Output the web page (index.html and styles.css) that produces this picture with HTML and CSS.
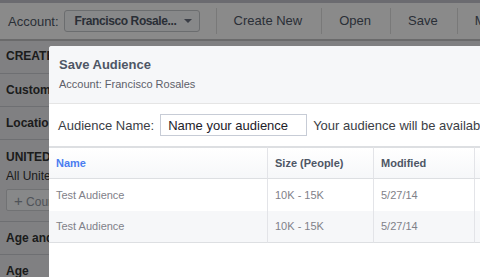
FILE: index.html
```html
<!DOCTYPE html>
<html>
<head>
    <title>Power Editor - Save Audience</title>
    <link rel="stylesheet" href="styles.css">
</head>
<body>
    <div class="page">
        <div class="toolbar">
            <span class="account-label">Account:</span>
            <div class="account-select">
                <span class="account-name">Francisco Rosale...</span>
                <span class="caret"></span>
            </div>
            <div class="tool">Create New</div>
            <div class="tool">Open</div>
            <div class="tool">Save</div>
            <div class="tool">Manage</div>
        </div>

        <div class="sidebar">
            <div class="side-row side-title">CREATE AUDIENCE</div>
            <div class="side-row">Custom Audiences</div>
            <div class="side-row">Locations</div>
            <div class="side-block">
                <div class="country">UNITED STATES</div>
                <div class="country-sub">All United States</div>
                <button class="add-btn"><span class="plus">+</span> Country</button>
            </div>
            <div class="side-row">Age and Gender</div>
            <div class="side-row">Age</div>
        </div>
    </div>

    <div class="overlay"></div>

    <div class="dialog">
        <div class="dialog-head">
            <div class="dialog-title">Save Audience</div>
            <div class="dialog-sub">Account: Francisco Rosales</div>
        </div>

        <div class="name-row">
            <label for="audienceName">Audience Name:</label>
            <input type="text" id="audienceName" value="Name your audience">
            <span class="name-note">Your audience will be available in all of your accounts</span>
        </div>

        <table class="audience-table">
            <thead>
                <tr>
                    <th class="col-name sorted">Name</th>
                    <th class="col-size">Size (People)</th>
                    <th class="col-date">Modified</th>
                    <th class="col-desc">Description</th>
                </tr>
            </thead>
            <tbody>
                <tr>
                    <td>Test Audience</td>
                    <td>10K - 15K</td>
                    <td>5/27/14</td>
                    <td></td>
                </tr>
                <tr class="alt">
                    <td>Test Audience</td>
                    <td>10K - 15K</td>
                    <td>5/27/14</td>
                    <td></td>
                </tr>
            </tbody>
        </table>
    </div>
</body>
</html>
```

FILE: styles.css
```css
body {
    margin: 0;
    width: 480px;
    height: 277px;
    overflow: hidden;
    position: relative;
    font-family: "Liberation Sans", Arial, sans-serif;
    background-color: #e9eaed;
}
.page {
    width: 480px;
    height: 277px;
}

/* top toolbar */
.toolbar {
    display: flex;
    align-items: center;
    height: 36px;
    padding-left: 8px;
    background-color: #fcfcfc;
    border-top: 3px solid #c4c4cc;
    border-bottom: 2px solid #c2c2c4;
    white-space: nowrap;
    font-size: 13px;
    color: #4e5665;
}
.account-label {
    flex-shrink: 0;
    margin-right: 5px;
}
.account-select {
    flex-shrink: 0;
    display: flex;
    align-items: center;
    justify-content: space-between;
    width: 136px;
    height: 22px;
    box-sizing: border-box;
    padding: 0 7px 0 10px;
    background-color: #f6f7f9;
    border: 1px solid #c4c6ca;
    border-radius: 3px;
    margin-right: 16px;
}
.account-name {
    font-weight: bold;
    font-size: 12px;
    letter-spacing: -0.4px;
}
.caret {
    width: 0;
    height: 0;
    border-left: 4px solid transparent;
    border-right: 4px solid transparent;
    border-top: 4px solid #6a7180;
}
.tool {
    flex-shrink: 0;
    height: 26px;
    line-height: 26px;
    padding: 0 19px 0 17px;
    border-left: 1px solid #dcdcdc;
}

/* left column, mostly hidden under the dialog */
.sidebar {
    width: 49px;
    overflow: hidden;
    font-size: 12px;
    color: #333;
    white-space: nowrap;
}
.side-row {
    padding: 8px 6px;
    line-height: 16px;
    font-weight: bold;
    border-bottom: 1px solid #c9cbd0;
}
.side-title {
    padding: 7px 6px 9px;
}
.side-block {
    padding: 9px 6px 10px;
    line-height: 16px;
    border-bottom: 1px solid #c9cbd0;
}
.country {
    font-weight: bold;
}
.country-sub {
    margin-top: 3px;
}
.add-btn {
    display: block;
    margin-top: 5px;
    height: 22px;
    width: 110px;
    padding: 0 7px;
    text-align: left;
    font-family: inherit;
    font-size: 12px;
    color: #9197a3;
    background-color: #f6f7f9;
    border: 1px solid #ced0d4;
    border-radius: 2px;
}
.plus {
    font-size: 15px;
    font-weight: 300;
}

/* modal */
.overlay {
    position: absolute;
    top: 0;
    left: 0;
    right: 0;
    bottom: 0;
    background-color: rgba(0, 0, 0, 0.45);
}
.dialog {
    position: absolute;
    top: 46px;
    left: 49px;
    width: 640px;
    height: 320px;
    overflow: hidden;
    background-color: #fff;
    border-radius: 3px 0 0 0;
}
.dialog-head {
    padding: 11px 10px 12px;
    background-color: #f6f7f9;
    border-bottom: 1px solid #e5e5e5;
}
.dialog-title {
    font-size: 13px;
    font-weight: bold;
    line-height: 16px;
    color: #4e5665;
}
.dialog-sub {
    margin-top: 4px;
    font-size: 11px;
    line-height: 14px;
    color: #5d6069;
}
.name-row {
    display: flex;
    align-items: center;
    gap: 6px;
    padding: 10px 9px;
    white-space: nowrap;
    font-size: 13px;
    color: #3b3e45;
}
.name-row input {
    width: 147px;
    height: 22px;
    box-sizing: border-box;
    padding: 0 7px;
    border: 1px solid #c7ccd6;
    border-radius: 0;
    font-family: inherit;
    font-size: 13px;
    color: #1d2129;
}
.name-row input:focus {
    outline: none;
}
.name-note {
    flex-shrink: 0;
}

/* audience list */
.audience-table {
    table-layout: fixed;
    width: 626px;
    border-spacing: 0;
    font-size: 11px;
}
.audience-table th,
.audience-table td {
    box-sizing: border-box;
    padding: 0 7px;
    text-align: left;
    white-space: nowrap;
    border-right: 1px solid #e3e4e8;
}
.audience-table th {
    line-height: 30px;
    font-weight: bold;
    color: #4e5665;
    background: linear-gradient(#ffffff, #f6f7f9);
    border-top: 2px solid #dddfe2;
    border-bottom: 1px solid #dddfe2;
}
.audience-table th.sorted {
    color: #4b7df0;
}
.col-name { width: 219px; }
.col-size { width: 106px; }
.col-date { width: 101px; }
.col-desc { width: 200px; }
.audience-table td {
    line-height: 32px;
    color: #7f8189;
}
.audience-table tr.alt td {
    line-height: 31px;
    background-color: #f6f7f9;
    border-bottom: 1px solid #dddfe2;
}
```
